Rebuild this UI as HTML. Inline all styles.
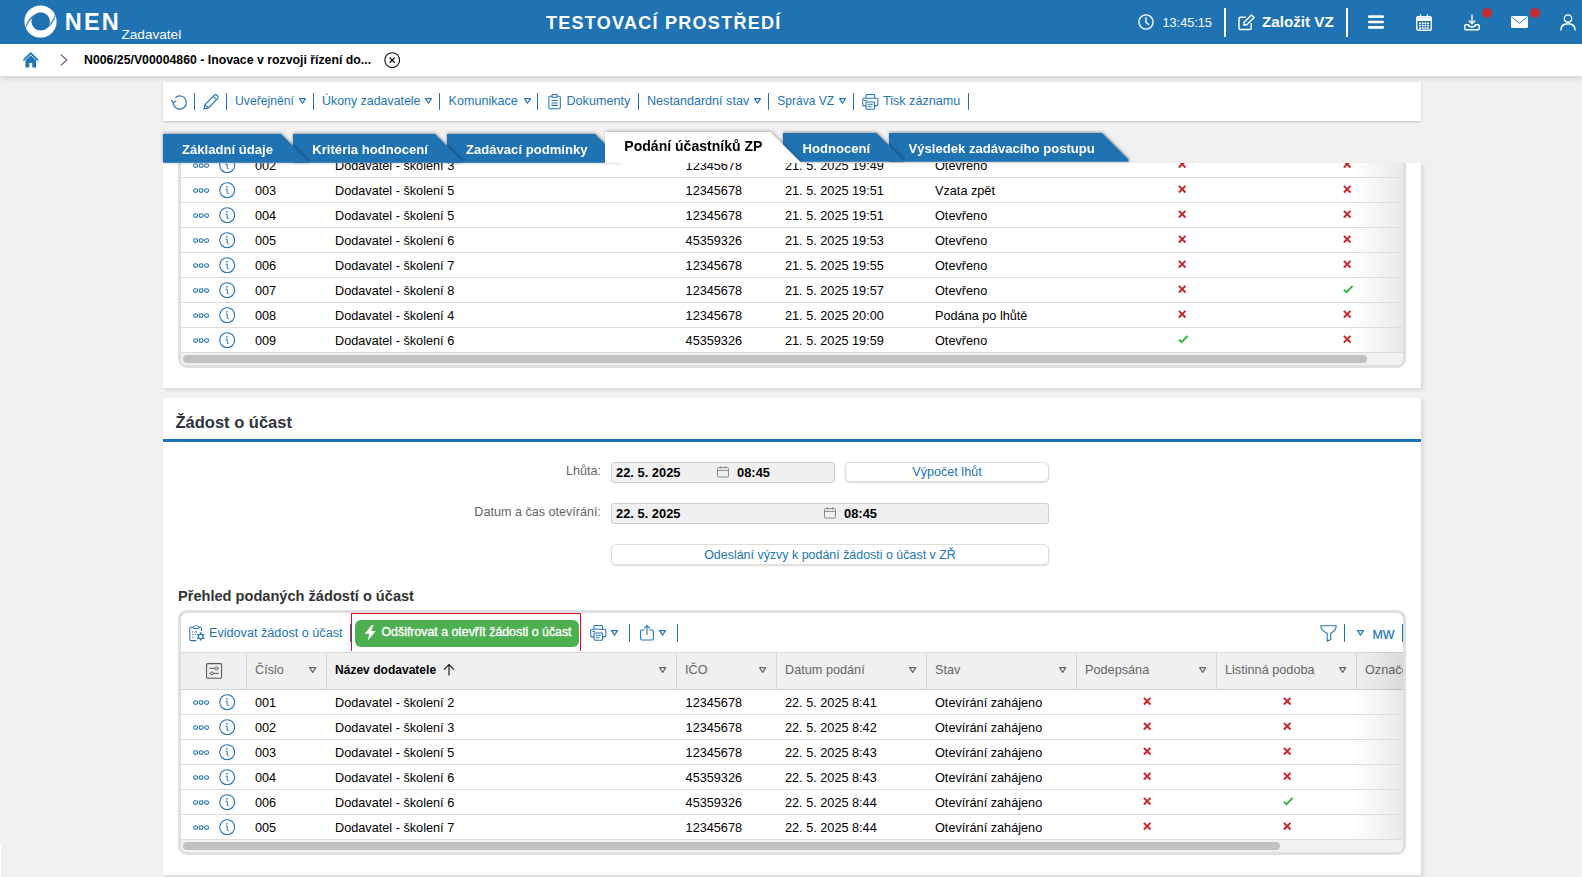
<!DOCTYPE html>
<html lang="cs"><head><meta charset="utf-8"><title>NEN</title>
<style>
*{box-sizing:border-box;margin:0;padding:0}
html,body{width:1582px;height:877px;overflow:hidden;background:#f1f1f1;font-family:"Liberation Sans",sans-serif;font-size:12.6px;color:#000}
.a{position:absolute;white-space:nowrap}
svg{position:absolute;overflow:visible}
#hdr{left:0;top:0;width:1582px;height:44px;background:#1f73b3;z-index:20}
#bc{left:0;top:44px;width:1582px;height:32px;background:#fff;box-shadow:0 2px 5px rgba(0,0,0,.15);z-index:19}
#tb{left:163px;top:82px;width:1258px;height:39px;background:#fff;box-shadow:0 1px 2px rgba(0,0,0,.18)}
.tbt{top:94px;color:#2275b4;font-size:12.6px;line-height:15px}
.sep{width:1.3px;background:#2275b4}
#p1{left:163px;top:162.6px;width:1258px;height:225.4px;background:#fff;box-shadow:2px 2px 4px rgba(0,0,0,.12);overflow:hidden}
#p2{left:163px;top:398px;width:1258px;height:477px;background:#fff;box-shadow:2px 2px 4px rgba(0,0,0,.12)}
.grid{border:3px solid #dedfe0;border-radius:9px;background:#fff;overflow:hidden}
.row{left:0;width:1400px;height:25px;border-bottom:1px solid #dcdcdc;font-size:12.7px;line-height:24px}
.row span{position:absolute;top:0.7px}
.hc{top:0;height:36px;border-left:1px solid #d4d4d4;color:#666;font-size:12.7px;line-height:35px;padding-left:8px}
.fade{top:0;right:0;width:52px;background:linear-gradient(to right,rgba(0,0,0,0),rgba(0,0,0,.035) 45%,rgba(0,0,0,.09))}
.sbt{left:0;height:13px;background:#f1f1f1}
.sbth{height:8px;border-radius:4px;background:#c1c1c1}
.tab{top:133.7px;height:28.6px;color:#fff;font-weight:bold;font-size:13.1px;line-height:29px;filter:drop-shadow(0 -1px 1.5px rgba(0,0,0,.25)) drop-shadow(1.5px 0 1.5px rgba(0,0,0,.2))}
.lbl{color:#666;font-size:12.6px;text-align:right}
.fld{background:#f0f0f0;border:1px solid #cfcfcf;border-radius:3px;height:21px}
.fv{font-weight:bold;font-size:12.9px;line-height:15px}
.btn{background:#fff;border:1px solid #ddd;border-radius:5px;box-shadow:0 1px 2px rgba(0,0,0,.15);color:#2275b4;text-align:center;font-size:12.6px}
</style></head>
<body>
<div id="hdr" class="a">
<svg style="left:24px;top:5.4px" width="33" height="33" viewBox="0 0 33 33"><circle cx="16.5" cy="16.5" r="16.1" fill="#fff"/><circle cx="16.7" cy="16.4" r="9.2" fill="#1f73b3"/><path d="M9.6 10.2Q3.6 14.6 1.4 23.2Q4.4 15.4 10.2 11Z" fill="#1f73b3" stroke="#1f73b3" stroke-width="0.5"/><path d="M23.4 22.8Q29.4 18.4 31.6 9.8Q28.6 17.6 22.8 22Z" fill="#1f73b3" stroke="#1f73b3" stroke-width="0.5"/></svg>
<div class="a" style="left:64.8px;top:9px;font-size:23.5px;font-weight:bold;color:#fff;letter-spacing:2.2px;line-height:27px">NEN</div>
<div class="a" style="left:121.5px;top:27px;font-size:13.6px;color:#fff;line-height:16px">Zadavatel</div>
<div class="a" style="left:546px;top:11.7px;font-size:18px;font-weight:bold;color:#fff;letter-spacing:1.27px;line-height:22px">TESTOVACÍ PROSTŘEDÍ</div>
<svg style="left:1138px;top:14px" width="16" height="16" viewBox="0 0 16 16"><circle cx="8" cy="8" r="7.1" fill="none" stroke="#fff" stroke-width="1.4"/><path d="M8 3.8V8.2L10.6 10.6" fill="none" stroke="#fff" stroke-width="1.4" stroke-linecap="round"/></svg>
<div class="a" style="left:1162.5px;top:15.9px;font-size:12.7px;color:#fff;line-height:15px">13:45:15</div>
<div class="a" style="left:1224px;top:8px;width:2px;height:29px;background:#fff"></div>
<svg style="left:1238px;top:13.5px" width="17" height="17" viewBox="0 0 17 17"><path d="M8 3.2H2.6Q1 3.2 1 4.8V14Q1 15.6 2.6 15.6H11.6Q13.2 15.6 13.2 14V9" fill="none" stroke="#fff" stroke-width="1.5"/><path d="M6.2 8.2L13.4 1L16 3.6L8.8 10.8L5.8 11.2Z" fill="none" stroke="#fff" stroke-width="1.4" stroke-linejoin="round"/></svg>
<div class="a" style="left:1262px;top:12.5px;font-size:15.2px;font-weight:bold;color:#fff;line-height:18px">Založit VZ</div>
<div class="a" style="left:1346px;top:8px;width:2px;height:29px;background:#fff"></div>
<svg style="left:1368px;top:15px" width="16" height="14" viewBox="0 0 16 14"><path d="M1.2 1.6H14.8M1.2 7H14.8M1.2 12.4H14.8" stroke="#fff" stroke-width="2.6" stroke-linecap="round"/></svg>
<svg style="left:1416px;top:13.5px" width="16" height="17" viewBox="0 0 16 17"><rect x="0.7" y="2.7" width="14.6" height="13.6" rx="1.5" fill="none" stroke="#fff" stroke-width="1.4"/><path d="M0.7 3.5H15.3V7H0.7Z" fill="#fff"/><path d="M4.5 0.3V3M11.5 0.3V3" stroke="#fff" stroke-width="1.4"/><path d="M3 9.2H13M3 11.6H13M3 14H13" stroke="#fff" stroke-width="1.5" stroke-dasharray="2 0.7"/></svg>
<svg style="left:1464px;top:13.5px" width="16" height="17" viewBox="0 0 16 17"><path d="M8 0.5V9.5M4.8 6.6L8 9.8L11.2 6.6" fill="none" stroke="#fff" stroke-width="1.4"/><path d="M4.5 10.8H2Q0.8 10.8 0.8 12V14.6Q0.8 15.8 2 15.8H14Q15.2 15.8 15.2 14.6V12Q15.2 10.8 14 10.8H11.5Q11.2 12.8 9.5 12.8H6.5Q4.8 12.8 4.5 10.8Z" fill="none" stroke="#fff" stroke-width="1.4"/></svg>
<div class="a" style="left:1482px;top:8px;width:10.2px;height:10.2px;border-radius:50%;background:#c62b2b"></div>
<svg style="left:1511px;top:16px" width="17" height="12" viewBox="0 0 17 12"><rect x="0" y="0" width="17" height="12" rx="1.6" fill="#fff"/><path d="M1.5 1.6L8.5 7.2L15.5 1.6" fill="none" stroke="#1f73b3" stroke-width="0.9"/></svg>
<div class="a" style="left:1530px;top:8px;width:10.2px;height:10.2px;border-radius:50%;background:#c62b2b"></div>
<svg style="left:1560px;top:13.5px" width="16" height="17" viewBox="0 0 16 17"><circle cx="8" cy="4.6" r="3.7" fill="none" stroke="#fff" stroke-width="1.4"/><path d="M0.8 16.5Q0.8 9.8 8 9.8Q15.2 9.8 15.2 16.5" fill="none" stroke="#fff" stroke-width="1.4"/></svg>
</div>
<div id="bc" class="a">
<svg style="left:23.2px;top:7.6px" width="15.5" height="16.2" viewBox="0 0 16 17"><path d="M0.8 8.2L8 1.2L15.2 8.2" fill="none" stroke="#2275b4" stroke-width="1.8" stroke-linecap="round" stroke-linejoin="round"/><path d="M2.4 8.6L8 3.4L13.6 8.6V16.4H9.6V11.6H6.4V16.4H2.4Z" fill="#2275b4"/></svg>
<svg style="left:60px;top:10px" width="8" height="12" viewBox="0 0 8 12"><path d="M0.8 0.6L6.8 6L0.8 11.4" fill="none" stroke="#45597a" stroke-width="1.1"/></svg>
<div class="a" style="left:84px;top:8.5px;font-size:12.3px;font-weight:bold;color:#000;line-height:15px">N006/25/V00004860 - Inovace v rozvoji řízení do...</div>
<svg style="left:384px;top:8px" width="16.4" height="16.4" viewBox="0 0 16.4 16.4"><circle cx="8.2" cy="8.2" r="7.4" fill="none" stroke="#111" stroke-width="1.1"/><path d="M5.6 5.6L10.8 10.8M10.8 5.6L5.6 10.8" stroke="#111" stroke-width="1.3"/></svg>
</div>
<div id="tb" class="a"></div>
<svg style="left:170.5px;top:94px" width="17" height="16" viewBox="0 0 17 16"><path d="M2.2 8.6A6.6 6.6 0 1 0 4.4 3.6" fill="none" stroke="#2275b4" stroke-width="1.2"/><path d="M0.4 6.2L2.4 9L5.2 7" fill="none" stroke="#2275b4" stroke-width="1.2"/></svg>
<div class="a sep" style="left:194.1px;top:93px;height:16.9px"></div>
<svg style="left:203px;top:94px" width="16" height="16" viewBox="0 0 16 16"><path d="M1 15L2 10.6L11.6 1Q12.6 0.2 13.8 1.2L14.8 2.2Q15.8 3.4 14.8 4.4L5.4 14Z" fill="none" stroke="#2275b4" stroke-width="1.15" stroke-linejoin="round"/><path d="M2 10.6L5.4 14M10.4 2.4L13.6 5.6" stroke="#2275b4" stroke-width="1.1" fill="none"/></svg>
<div class="a sep" style="left:226.1px;top:93px;height:16.9px"></div>
<div class="a tbt" style="left:235px;font-size:12.2px">Uveřejnění</div>
<svg style="left:298.5px;top:97.9px" width="7" height="6" viewBox="0 0 7 6"><path d="M0.6 0.6H6.4L3.5 5.2Z" fill="none" stroke="#2275b4" stroke-width="1.2" stroke-linejoin="round"/></svg>
<div class="a sep" style="left:313.1px;top:93px;height:16.9px"></div>
<div class="a tbt" style="left:322px;font-size:12.4px">Úkony zadavatele</div>
<svg style="left:425px;top:97.9px" width="7" height="6" viewBox="0 0 7 6"><path d="M0.6 0.6H6.4L3.5 5.2Z" fill="none" stroke="#2275b4" stroke-width="1.2" stroke-linejoin="round"/></svg>
<div class="a sep" style="left:439.1px;top:93px;height:16.9px"></div>
<div class="a tbt" style="left:448.5px;font-size:12.6px">Komunikace</div>
<svg style="left:523.5px;top:97.9px" width="7" height="6" viewBox="0 0 7 6"><path d="M0.6 0.6H6.4L3.5 5.2Z" fill="none" stroke="#2275b4" stroke-width="1.2" stroke-linejoin="round"/></svg>
<div class="a sep" style="left:537.1px;top:93px;height:16.9px"></div>
<svg style="left:547.5px;top:94.2px" width="13.2" height="15.4" viewBox="0 0 13.5 16.5"><rect x="0.6" y="2.4" width="12.3" height="13.5" rx="1.4" fill="none" stroke="#2275b4" stroke-width="1.1"/><path d="M4 2.4V1.6Q4 0.6 5 0.6H8.5Q9.5 0.6 9.5 1.6V2.4V3.6H4Z" fill="#fff" stroke="#2275b4" stroke-width="1.1"/><path d="M3.4 7H10.1M3.4 9.6H10.1M3.4 12.2H10.1" stroke="#2275b4" stroke-width="1.1"/></svg>
<div class="a tbt" style="left:566.5px;font-size:12.6px">Dokumenty</div>
<div class="a sep" style="left:638.1px;top:93px;height:16.9px"></div>
<div class="a tbt" style="left:647px;font-size:12.6px">Nestandardní stav</div>
<svg style="left:754px;top:97.9px" width="7" height="6" viewBox="0 0 7 6"><path d="M0.6 0.6H6.4L3.5 5.2Z" fill="none" stroke="#2275b4" stroke-width="1.2" stroke-linejoin="round"/></svg>
<div class="a sep" style="left:768.1px;top:93px;height:16.9px"></div>
<div class="a tbt" style="left:777.3px;font-size:12.05px">Správa VZ</div>
<svg style="left:839px;top:97.9px" width="7" height="6" viewBox="0 0 7 6"><path d="M0.6 0.6H6.4L3.5 5.2Z" fill="none" stroke="#2275b4" stroke-width="1.2" stroke-linejoin="round"/></svg>
<div class="a sep" style="left:853.1px;top:93px;height:16.9px"></div>
<svg style="left:862px;top:94px" width="16.6" height="15.8" viewBox="0 0 17 16.5"><path d="M4 4.4V1.6Q4 0.6 5 0.6H12Q13 0.6 13 1.6V4.4" fill="none" stroke="#2275b4" stroke-width="1.1"/><path d="M4 12.4H2Q0.6 12.4 0.6 11V5.8Q0.6 4.4 2 4.4H15Q16.4 4.4 16.4 5.8V11Q16.4 12.4 15 12.4H13" fill="none" stroke="#2275b4" stroke-width="1.1"/><rect x="4" y="8.4" width="9" height="7.5" rx="1" fill="#fff" stroke="#2275b4" stroke-width="1.1"/><path d="M5.8 10.8H11.2M5.8 13.4H9.6M2.4 6.8H5" stroke="#2275b4" stroke-width="1.1"/></svg>
<div class="a tbt" style="left:883px;font-size:12.6px">Tisk záznamu</div>
<div class="a sep" style="left:968.1px;top:93px;height:16.9px"></div>
<div id="p1" class="a">
<div class="a grid" style="left:15px;top:-59.6px;width:1228px;height:265px">
<div class="a fade" style="height:247px"></div>
<div class="a row" style="top:47px"><svg style="left:12px;top:9.9px" width="17" height="5.2" viewBox="0 0 17 5.2"><ellipse cx="2.6" cy="2.6" rx="2" ry="1.8" fill="none" stroke="#2275b4" stroke-width="1.1"/><ellipse cx="8.1" cy="2.6" rx="2" ry="1.8" fill="none" stroke="#2275b4" stroke-width="1.1"/><ellipse cx="13.6" cy="2.6" rx="2" ry="1.8" fill="none" stroke="#2275b4" stroke-width="1.1"/></svg><svg style="left:37.8px;top:4.300000000000001px" width="16.4" height="16.4" viewBox="0 0 16.4 16.4"><circle cx="8.2" cy="8.2" r="7.5" fill="none" stroke="#2275b4" stroke-width="1.1"/><circle cx="7.9" cy="4.9" r="0.8" fill="#2275b4"/><path d="M7 7.2H8.2V11.2Q8.2 11.9 9.3 11.6" fill="none" stroke="#2275b4" stroke-width="1" stroke-linecap="round"/></svg><span style="left:74px">002</span><span style="left:154px">Dodavatel - školení 3</span><span style="left:504.6px">12345678</span><span style="left:604px">21. 5. 2025 19:49</span><span style="left:754px">Otevřeno</span><svg style="left:997.3px;top:7.3px" width="8.4" height="8.4" viewBox="0 0 8.4 8.4"><path d="M0.9 0.9L7.5 7.5M7.5 0.9L0.9 7.5" stroke="#c9282a" stroke-width="2" fill="none"/></svg><svg style="left:1162.3px;top:7.3px" width="8.4" height="8.4" viewBox="0 0 8.4 8.4"><path d="M0.9 0.9L7.5 7.5M7.5 0.9L0.9 7.5" stroke="#c9282a" stroke-width="2" fill="none"/></svg></div>
<div class="a row" style="top:72px"><svg style="left:12px;top:9.9px" width="17" height="5.2" viewBox="0 0 17 5.2"><ellipse cx="2.6" cy="2.6" rx="2" ry="1.8" fill="none" stroke="#2275b4" stroke-width="1.1"/><ellipse cx="8.1" cy="2.6" rx="2" ry="1.8" fill="none" stroke="#2275b4" stroke-width="1.1"/><ellipse cx="13.6" cy="2.6" rx="2" ry="1.8" fill="none" stroke="#2275b4" stroke-width="1.1"/></svg><svg style="left:37.8px;top:4.300000000000001px" width="16.4" height="16.4" viewBox="0 0 16.4 16.4"><circle cx="8.2" cy="8.2" r="7.5" fill="none" stroke="#2275b4" stroke-width="1.1"/><circle cx="7.9" cy="4.9" r="0.8" fill="#2275b4"/><path d="M7 7.2H8.2V11.2Q8.2 11.9 9.3 11.6" fill="none" stroke="#2275b4" stroke-width="1" stroke-linecap="round"/></svg><span style="left:74px">003</span><span style="left:154px">Dodavatel - školení 5</span><span style="left:504.6px">12345678</span><span style="left:604px">21. 5. 2025 19:51</span><span style="left:754px">Vzata zpět</span><svg style="left:997.3px;top:7.3px" width="8.4" height="8.4" viewBox="0 0 8.4 8.4"><path d="M0.9 0.9L7.5 7.5M7.5 0.9L0.9 7.5" stroke="#c9282a" stroke-width="2" fill="none"/></svg><svg style="left:1162.3px;top:7.3px" width="8.4" height="8.4" viewBox="0 0 8.4 8.4"><path d="M0.9 0.9L7.5 7.5M7.5 0.9L0.9 7.5" stroke="#c9282a" stroke-width="2" fill="none"/></svg></div>
<div class="a row" style="top:97px"><svg style="left:12px;top:9.9px" width="17" height="5.2" viewBox="0 0 17 5.2"><ellipse cx="2.6" cy="2.6" rx="2" ry="1.8" fill="none" stroke="#2275b4" stroke-width="1.1"/><ellipse cx="8.1" cy="2.6" rx="2" ry="1.8" fill="none" stroke="#2275b4" stroke-width="1.1"/><ellipse cx="13.6" cy="2.6" rx="2" ry="1.8" fill="none" stroke="#2275b4" stroke-width="1.1"/></svg><svg style="left:37.8px;top:4.300000000000001px" width="16.4" height="16.4" viewBox="0 0 16.4 16.4"><circle cx="8.2" cy="8.2" r="7.5" fill="none" stroke="#2275b4" stroke-width="1.1"/><circle cx="7.9" cy="4.9" r="0.8" fill="#2275b4"/><path d="M7 7.2H8.2V11.2Q8.2 11.9 9.3 11.6" fill="none" stroke="#2275b4" stroke-width="1" stroke-linecap="round"/></svg><span style="left:74px">004</span><span style="left:154px">Dodavatel - školení 5</span><span style="left:504.6px">12345678</span><span style="left:604px">21. 5. 2025 19:51</span><span style="left:754px">Otevřeno</span><svg style="left:997.3px;top:7.3px" width="8.4" height="8.4" viewBox="0 0 8.4 8.4"><path d="M0.9 0.9L7.5 7.5M7.5 0.9L0.9 7.5" stroke="#c9282a" stroke-width="2" fill="none"/></svg><svg style="left:1162.3px;top:7.3px" width="8.4" height="8.4" viewBox="0 0 8.4 8.4"><path d="M0.9 0.9L7.5 7.5M7.5 0.9L0.9 7.5" stroke="#c9282a" stroke-width="2" fill="none"/></svg></div>
<div class="a row" style="top:122px"><svg style="left:12px;top:9.9px" width="17" height="5.2" viewBox="0 0 17 5.2"><ellipse cx="2.6" cy="2.6" rx="2" ry="1.8" fill="none" stroke="#2275b4" stroke-width="1.1"/><ellipse cx="8.1" cy="2.6" rx="2" ry="1.8" fill="none" stroke="#2275b4" stroke-width="1.1"/><ellipse cx="13.6" cy="2.6" rx="2" ry="1.8" fill="none" stroke="#2275b4" stroke-width="1.1"/></svg><svg style="left:37.8px;top:4.300000000000001px" width="16.4" height="16.4" viewBox="0 0 16.4 16.4"><circle cx="8.2" cy="8.2" r="7.5" fill="none" stroke="#2275b4" stroke-width="1.1"/><circle cx="7.9" cy="4.9" r="0.8" fill="#2275b4"/><path d="M7 7.2H8.2V11.2Q8.2 11.9 9.3 11.6" fill="none" stroke="#2275b4" stroke-width="1" stroke-linecap="round"/></svg><span style="left:74px">005</span><span style="left:154px">Dodavatel - školení 6</span><span style="left:504.6px">45359326</span><span style="left:604px">21. 5. 2025 19:53</span><span style="left:754px">Otevřeno</span><svg style="left:997.3px;top:7.3px" width="8.4" height="8.4" viewBox="0 0 8.4 8.4"><path d="M0.9 0.9L7.5 7.5M7.5 0.9L0.9 7.5" stroke="#c9282a" stroke-width="2" fill="none"/></svg><svg style="left:1162.3px;top:7.3px" width="8.4" height="8.4" viewBox="0 0 8.4 8.4"><path d="M0.9 0.9L7.5 7.5M7.5 0.9L0.9 7.5" stroke="#c9282a" stroke-width="2" fill="none"/></svg></div>
<div class="a row" style="top:147px"><svg style="left:12px;top:9.9px" width="17" height="5.2" viewBox="0 0 17 5.2"><ellipse cx="2.6" cy="2.6" rx="2" ry="1.8" fill="none" stroke="#2275b4" stroke-width="1.1"/><ellipse cx="8.1" cy="2.6" rx="2" ry="1.8" fill="none" stroke="#2275b4" stroke-width="1.1"/><ellipse cx="13.6" cy="2.6" rx="2" ry="1.8" fill="none" stroke="#2275b4" stroke-width="1.1"/></svg><svg style="left:37.8px;top:4.300000000000001px" width="16.4" height="16.4" viewBox="0 0 16.4 16.4"><circle cx="8.2" cy="8.2" r="7.5" fill="none" stroke="#2275b4" stroke-width="1.1"/><circle cx="7.9" cy="4.9" r="0.8" fill="#2275b4"/><path d="M7 7.2H8.2V11.2Q8.2 11.9 9.3 11.6" fill="none" stroke="#2275b4" stroke-width="1" stroke-linecap="round"/></svg><span style="left:74px">006</span><span style="left:154px">Dodavatel - školení 7</span><span style="left:504.6px">12345678</span><span style="left:604px">21. 5. 2025 19:55</span><span style="left:754px">Otevřeno</span><svg style="left:997.3px;top:7.3px" width="8.4" height="8.4" viewBox="0 0 8.4 8.4"><path d="M0.9 0.9L7.5 7.5M7.5 0.9L0.9 7.5" stroke="#c9282a" stroke-width="2" fill="none"/></svg><svg style="left:1162.3px;top:7.3px" width="8.4" height="8.4" viewBox="0 0 8.4 8.4"><path d="M0.9 0.9L7.5 7.5M7.5 0.9L0.9 7.5" stroke="#c9282a" stroke-width="2" fill="none"/></svg></div>
<div class="a row" style="top:172px"><svg style="left:12px;top:9.9px" width="17" height="5.2" viewBox="0 0 17 5.2"><ellipse cx="2.6" cy="2.6" rx="2" ry="1.8" fill="none" stroke="#2275b4" stroke-width="1.1"/><ellipse cx="8.1" cy="2.6" rx="2" ry="1.8" fill="none" stroke="#2275b4" stroke-width="1.1"/><ellipse cx="13.6" cy="2.6" rx="2" ry="1.8" fill="none" stroke="#2275b4" stroke-width="1.1"/></svg><svg style="left:37.8px;top:4.300000000000001px" width="16.4" height="16.4" viewBox="0 0 16.4 16.4"><circle cx="8.2" cy="8.2" r="7.5" fill="none" stroke="#2275b4" stroke-width="1.1"/><circle cx="7.9" cy="4.9" r="0.8" fill="#2275b4"/><path d="M7 7.2H8.2V11.2Q8.2 11.9 9.3 11.6" fill="none" stroke="#2275b4" stroke-width="1" stroke-linecap="round"/></svg><span style="left:74px">007</span><span style="left:154px">Dodavatel - školení 8</span><span style="left:504.6px">12345678</span><span style="left:604px">21. 5. 2025 19:57</span><span style="left:754px">Otevřeno</span><svg style="left:997.3px;top:7.3px" width="8.4" height="8.4" viewBox="0 0 8.4 8.4"><path d="M0.9 0.9L7.5 7.5M7.5 0.9L0.9 7.5" stroke="#c9282a" stroke-width="2" fill="none"/></svg><svg style="left:1161.8px;top:7.3px" width="10.4" height="8.4" viewBox="0 0 10.4 8.4"><path d="M0.9 4.8L3.6 7.2L9.6 0.9" stroke="#2fb843" stroke-width="2" fill="none"/></svg></div>
<div class="a row" style="top:197px"><svg style="left:12px;top:9.9px" width="17" height="5.2" viewBox="0 0 17 5.2"><ellipse cx="2.6" cy="2.6" rx="2" ry="1.8" fill="none" stroke="#2275b4" stroke-width="1.1"/><ellipse cx="8.1" cy="2.6" rx="2" ry="1.8" fill="none" stroke="#2275b4" stroke-width="1.1"/><ellipse cx="13.6" cy="2.6" rx="2" ry="1.8" fill="none" stroke="#2275b4" stroke-width="1.1"/></svg><svg style="left:37.8px;top:4.300000000000001px" width="16.4" height="16.4" viewBox="0 0 16.4 16.4"><circle cx="8.2" cy="8.2" r="7.5" fill="none" stroke="#2275b4" stroke-width="1.1"/><circle cx="7.9" cy="4.9" r="0.8" fill="#2275b4"/><path d="M7 7.2H8.2V11.2Q8.2 11.9 9.3 11.6" fill="none" stroke="#2275b4" stroke-width="1" stroke-linecap="round"/></svg><span style="left:74px">008</span><span style="left:154px">Dodavatel - školení 4</span><span style="left:504.6px">12345678</span><span style="left:604px">21. 5. 2025 20:00</span><span style="left:754px">Podána po lhůtě</span><svg style="left:997.3px;top:7.3px" width="8.4" height="8.4" viewBox="0 0 8.4 8.4"><path d="M0.9 0.9L7.5 7.5M7.5 0.9L0.9 7.5" stroke="#c9282a" stroke-width="2" fill="none"/></svg><svg style="left:1162.3px;top:7.3px" width="8.4" height="8.4" viewBox="0 0 8.4 8.4"><path d="M0.9 0.9L7.5 7.5M7.5 0.9L0.9 7.5" stroke="#c9282a" stroke-width="2" fill="none"/></svg></div>
<div class="a row" style="top:222px"><svg style="left:12px;top:9.9px" width="17" height="5.2" viewBox="0 0 17 5.2"><ellipse cx="2.6" cy="2.6" rx="2" ry="1.8" fill="none" stroke="#2275b4" stroke-width="1.1"/><ellipse cx="8.1" cy="2.6" rx="2" ry="1.8" fill="none" stroke="#2275b4" stroke-width="1.1"/><ellipse cx="13.6" cy="2.6" rx="2" ry="1.8" fill="none" stroke="#2275b4" stroke-width="1.1"/></svg><svg style="left:37.8px;top:4.300000000000001px" width="16.4" height="16.4" viewBox="0 0 16.4 16.4"><circle cx="8.2" cy="8.2" r="7.5" fill="none" stroke="#2275b4" stroke-width="1.1"/><circle cx="7.9" cy="4.9" r="0.8" fill="#2275b4"/><path d="M7 7.2H8.2V11.2Q8.2 11.9 9.3 11.6" fill="none" stroke="#2275b4" stroke-width="1" stroke-linecap="round"/></svg><span style="left:74px">009</span><span style="left:154px">Dodavatel - školení 6</span><span style="left:504.6px">45359326</span><span style="left:604px">21. 5. 2025 19:59</span><span style="left:754px">Otevřeno</span><svg style="left:996.8px;top:7.3px" width="10.4" height="8.4" viewBox="0 0 10.4 8.4"><path d="M0.9 4.8L3.6 7.2L9.6 0.9" stroke="#2fb843" stroke-width="2" fill="none"/></svg><svg style="left:1162.3px;top:7.3px" width="8.4" height="8.4" viewBox="0 0 8.4 8.4"><path d="M0.9 0.9L7.5 7.5M7.5 0.9L0.9 7.5" stroke="#c9282a" stroke-width="2" fill="none"/></svg></div>
<div class="a sbt" style="top:247px;width:1222px"></div>
<div class="a sbth" style="left:2px;top:249px;width:1184px"></div>
</div></div>
<div class="a tab" style="left:889px;top:133.1px;width:239.5px;z-index:6"><div class="a" style="left:0;top:0;width:239.5px;height:28.6px;background:#1f73b3;clip-path:polygon(0 0,213px 0,239.5px 26.5px,239.5px 28.6px,0 28.6px)"></div><div class="a" style="left:19.5px;top:0.6px">Výsledek zadávacího postupu</div></div>
<div class="a tab" style="left:783px;top:133.1px;width:120.0px;z-index:7"><div class="a" style="left:0;top:0;width:120.0px;height:28.6px;background:#1f73b3;clip-path:polygon(0 0,93.5px 0,120.0px 26.5px,120.0px 28.6px,0 28.6px)"></div><div class="a" style="left:19.5px;top:0.6px">Hodnocení</div></div>
<div class="a tab" style="left:447px;top:134.1px;width:174.5px;z-index:8"><div class="a" style="left:0;top:0;width:174.5px;height:28.6px;background:#1f73b3;clip-path:polygon(0 0,148px 0,174.5px 26.5px,174.5px 28.6px,0 28.6px)"></div><div class="a" style="left:19px;top:0.6px">Zadávací podmínky</div></div>
<div class="a tab" style="left:293px;top:134.1px;width:168.5px;z-index:9"><div class="a" style="left:0;top:0;width:168.5px;height:28.6px;background:#1f73b3;clip-path:polygon(0 0,142px 0,168.5px 26.5px,168.5px 28.6px,0 28.6px)"></div><div class="a" style="left:19.30000000000001px;top:0.6px">Kritéria hodnocení</div></div>
<div class="a tab" style="left:163px;top:134.1px;width:144.5px;z-index:10"><div class="a" style="left:0;top:0;width:144.5px;height:28.6px;background:#1f73b3;clip-path:polygon(0 0,118px 0,144.5px 26.5px,144.5px 28.6px,0 28.6px)"></div><div class="a" style="left:19px;top:0.6px">Základní údaje</div></div>
<div class="a" style="left:595px;top:122px;width:220px;height:40.9px;overflow:hidden;z-index:11"><div class="a" style="left:10px;top:10px;width:196px;height:30.9px;filter:drop-shadow(0 -1px 1.5px rgba(0,0,0,.1)) drop-shadow(1.5px -0.5px 1.5px rgba(0,0,0,.18))"><div class="a" style="left:0;top:0;width:196px;height:30.9px;background:#fff;clip-path:polygon(0 0,165.5px 0,196px 30.5px,196px 30.9px,0 30.9px)"></div><div class="a" style="left:19.3px;top:6.4px;font-size:14.05px;font-weight:bold;line-height:17px">Podání účastníků ZP</div></div></div>
<div id="p2" class="a">
<div class="a" style="left:12.5px;top:14.1px;font-size:16.5px;font-weight:bold;color:#2c3440;line-height:20px">Žádost o účast</div>
<div class="a" style="left:0;top:41px;width:1258px;height:3px;background:#1f73b3"></div>
<div class="a lbl" style="left:237px;top:65.8px;width:201px;line-height:15px">Lhůta:</div>
<div class="a fld" style="left:448px;top:64px;width:224px"></div>
<div class="a fv" style="left:453px;top:66.8px">22. 5. 2025</div>
<svg style="left:554px;top:68px" width="12" height="11.5" viewBox="0 0 12 11.5"><rect x="0.5" y="1.6" width="11" height="9.4" rx="1" fill="none" stroke="#8a8a8a" stroke-width="1"/><path d="M0.5 4.4H11.5M3.3 0V2.6M8.7 0V2.6" stroke="#8a8a8a" stroke-width="1"/></svg>
<div class="a fv" style="left:574px;top:66.8px">08:45</div>
<div class="a btn" style="left:682px;top:64px;width:204px;height:19.5px;line-height:19.6px">Výpočet lhůt</div>
<div class="a lbl" style="left:237px;top:106.8px;width:201px;line-height:15px">Datum a čas otevírání:</div>
<div class="a fld" style="left:448px;top:105px;width:438px"></div>
<div class="a fv" style="left:453px;top:107.8px">22. 5. 2025</div>
<svg style="left:661px;top:109px" width="12" height="11.5" viewBox="0 0 12 11.5"><rect x="0.5" y="1.6" width="11" height="9.4" rx="1" fill="none" stroke="#8a8a8a" stroke-width="1"/><path d="M0.5 4.4H11.5M3.3 0V2.6M8.7 0V2.6" stroke="#8a8a8a" stroke-width="1"/></svg>
<div class="a fv" style="left:681px;top:107.8px">08:45</div>
<div class="a btn" style="left:448px;top:146px;width:438px;height:20.5px;line-height:20.6px;font-size:12.45px">Odeslání výzvy k podání žádosti o účast v ZŘ</div>
<div class="a" style="left:15px;top:188.5px;font-size:14.6px;font-weight:bold;color:#333;line-height:18px">Přehled podaných žádostí o účast</div>
<div class="a grid" style="left:15px;top:212px;width:1228px;height:244.7px">
<svg style="left:7.5px;top:11.5px" width="16.6" height="16.2" viewBox="0 0 17 17"><path d="M5.2 2.4H2Q0.6 2.4 0.6 3.8V15Q0.6 16.4 2 16.4H7.4" fill="none" stroke="#2275b4" stroke-width="1.1"/><path d="M9.8 2.4H11.6Q13 2.4 13 3.8V6.4" fill="none" stroke="#2275b4" stroke-width="1.1"/><path d="M4.6 3.6V2Q4.6 1.4 5.2 1.4H6Q6.4 0.4 7.4 0.4Q8.4 0.4 8.8 1.4H9.6Q10.2 1.4 10.2 2V3.6Z" fill="#fff" stroke="#2275b4" stroke-width="1"/><path d="M3 7.2H4.2M3 10H4.2M3 12.8H4.2M6 7.2H8M6 10H7" stroke="#2275b4" stroke-width="1.1"/><circle cx="12" cy="12" r="2.4" fill="none" stroke="#2275b4" stroke-width="1.1"/><path d="M12 7.6V9.4M12 14.6V16.4M8.2 9.8L9.8 10.7M14.2 13.3L15.8 14.2M8.2 14.2L9.8 13.3M14.2 10.7L15.8 9.8" stroke="#2275b4" stroke-width="1.5"/></svg>
<div class="a" style="left:28px;top:12.5px;color:#2275b4;font-size:12.65px;line-height:15px">Evidovat žádost o účast</div>
<div class="a sep" style="left:168.5px;top:11px;height:17.5px"></div>
<div class="a" style="left:170px;top:0;width:230px;height:37.5px;border:1px solid #e01020;border-bottom:none"></div>
<div class="a" style="left:174px;top:6.6px;width:223.8px;height:27px;background:#4caf50;border-radius:6px"></div>
<svg style="left:183px;top:12px" width="12.5" height="15.6" viewBox="0 0 12.5 15.6"><path d="M7.6 0L0.6 8.8H5.2L3.8 15.6L11.9 6H7.1L9.6 0Z" fill="#fff"/></svg>
<div class="a" style="left:200.5px;top:12.2px;color:#fff;font-size:12.35px;line-height:15px;-webkit-text-stroke:0.35px #fff">Odšifrovat a otevřít žádosti o účast</div>
<svg style="left:408.6px;top:12px" width="16.6" height="15.8" viewBox="0 0 17 16.5"><path d="M4 4.4V1.6Q4 0.6 5 0.6H12Q13 0.6 13 1.6V4.4" fill="none" stroke="#2275b4" stroke-width="1.1"/><path d="M4 12.4H2Q0.6 12.4 0.6 11V5.8Q0.6 4.4 2 4.4H15Q16.4 4.4 16.4 5.8V11Q16.4 12.4 15 12.4H13" fill="none" stroke="#2275b4" stroke-width="1.1"/><rect x="4" y="8.4" width="9" height="7.5" rx="1" fill="#fff" stroke="#2275b4" stroke-width="1.1"/><path d="M5.8 10.8H11.2M5.8 13.4H9.6M2.4 6.8H5" stroke="#2275b4" stroke-width="1.1"/></svg>
<svg style="left:429.5px;top:16.6px" width="7" height="6" viewBox="0 0 7 6"><path d="M0.6 0.6H6.4L3.5 5.2Z" fill="none" stroke="#2275b4" stroke-width="1.2" stroke-linejoin="round"/></svg>
<div class="a sep" style="left:447.8px;top:11px;height:17.5px"></div>
<svg style="left:459px;top:12px" width="14" height="15.6" viewBox="0 0 14 15.6"><path d="M4.4 5H2Q0.6 5 0.6 6.4V13.6Q0.6 15 2 15H12Q13.4 15 13.4 13.6V6.4Q13.4 5 12 5H9.6" fill="none" stroke="#2275b4" stroke-width="1.1"/><path d="M7 10V0.8M4.2 3.4L7 0.6L9.8 3.4" fill="none" stroke="#2275b4" stroke-width="1.1"/></svg>
<svg style="left:477.5px;top:16.6px" width="7" height="6" viewBox="0 0 7 6"><path d="M0.6 0.6H6.4L3.5 5.2Z" fill="none" stroke="#2275b4" stroke-width="1.2" stroke-linejoin="round"/></svg>
<div class="a sep" style="left:495.8px;top:11px;height:17.5px"></div>
<svg style="left:1138.5px;top:11.5px" width="17" height="17" viewBox="0 0 17 17"><path d="M0.8 0.8H16.2Q16.4 5.4 10.8 8.2V14.4L7.2 16.2V8.2Q0.6 5.4 0.8 0.8Z" fill="none" stroke="#2275b4" stroke-width="1.1" stroke-linejoin="round"/></svg>
<div class="a sep" style="left:1162.8px;top:11px;height:17.5px"></div>
<svg style="left:1176.3px;top:16.9px" width="7" height="6" viewBox="0 0 7 6"><path d="M0.6 0.6H6.4L3.5 5.2Z" fill="none" stroke="#2275b4" stroke-width="1.2" stroke-linejoin="round"/></svg>
<div class="a" style="left:1191.5px;top:14.6px;color:#2275b4;font-size:12.4px;-webkit-text-stroke:0.2px #2275b4;line-height:15px">MW</div>
<div class="a sep" style="left:1220.8px;top:11px;height:17.5px"></div>
<div class="a fade" style="top:77px;height:150px"></div>
<div class="a" style="left:0;top:39px;width:1222px;height:38.4px;background:#f0f0f0;border-top:1px solid #dcdcdc;border-bottom:1.6px solid #d2d2d2">
<svg style="left:25px;top:9.8px" width="16.2" height="15.8" viewBox="0 0 17 16.5"><rect x="0.6" y="0.6" width="15.8" height="15.3" rx="1.2" fill="none" stroke="#555" stroke-width="1.1"/><path d="M3.4 5.6H13.6M3.4 10.9H13.6" stroke="#555" stroke-width="1"/><circle cx="10.8" cy="5.6" r="1.5" fill="#f0f0f0" stroke="#555" stroke-width="1"/><circle cx="6.4" cy="10.9" r="1.5" fill="#f0f0f0" stroke="#555" stroke-width="1"/></svg>
<div class="a hc" style="left:65px;width:80px;">Číslo</div>
<svg style="left:128px;top:13.6px" width="7.4" height="6.2" viewBox="0 0 7.4 6.2"><path d="M0.6 0.6H6.800000000000001L3.7 5.4Z" fill="none" stroke="#666" stroke-width="1.2" stroke-linejoin="round"/></svg>
<div class="a hc" style="left:145px;width:350px;font-weight:bold;color:#000;font-size:12.05px;">Název dodavatele</div>
<svg style="left:478px;top:13.6px" width="7.4" height="6.2" viewBox="0 0 7.4 6.2"><path d="M0.6 0.6H6.800000000000001L3.7 5.4Z" fill="none" stroke="#666" stroke-width="1.2" stroke-linejoin="round"/></svg>
<div class="a hc" style="left:495px;width:100px;">IČO</div>
<svg style="left:578px;top:13.6px" width="7.4" height="6.2" viewBox="0 0 7.4 6.2"><path d="M0.6 0.6H6.800000000000001L3.7 5.4Z" fill="none" stroke="#666" stroke-width="1.2" stroke-linejoin="round"/></svg>
<div class="a hc" style="left:595px;width:150px;">Datum podání</div>
<svg style="left:728px;top:13.6px" width="7.4" height="6.2" viewBox="0 0 7.4 6.2"><path d="M0.6 0.6H6.800000000000001L3.7 5.4Z" fill="none" stroke="#666" stroke-width="1.2" stroke-linejoin="round"/></svg>
<div class="a hc" style="left:745px;width:150px;">Stav</div>
<svg style="left:878px;top:13.6px" width="7.4" height="6.2" viewBox="0 0 7.4 6.2"><path d="M0.6 0.6H6.800000000000001L3.7 5.4Z" fill="none" stroke="#666" stroke-width="1.2" stroke-linejoin="round"/></svg>
<div class="a hc" style="left:895px;width:140px;">Podepsána</div>
<svg style="left:1018px;top:13.6px" width="7.4" height="6.2" viewBox="0 0 7.4 6.2"><path d="M0.6 0.6H6.800000000000001L3.7 5.4Z" fill="none" stroke="#666" stroke-width="1.2" stroke-linejoin="round"/></svg>
<div class="a hc" style="left:1035px;width:140px;">Listinná podoba</div>
<svg style="left:1158px;top:13.6px" width="7.4" height="6.2" viewBox="0 0 7.4 6.2"><path d="M0.6 0.6H6.800000000000001L3.7 5.4Z" fill="none" stroke="#666" stroke-width="1.2" stroke-linejoin="round"/></svg>
<div class="a hc" style="left:1175px;width:140px;">Označení</div>
<svg style="left:261.5px;top:10.5px" width="12" height="12" viewBox="0 0 12 12"><path d="M6 11.6V0.8M1 5.6L6 0.6L11 5.6" fill="none" stroke="#111" stroke-width="1.1"/></svg>
</div>
<div class="a fade" style="top:39px;height:38px"></div>
<div class="a row" style="top:77px"><svg style="left:12px;top:9.9px" width="17" height="5.2" viewBox="0 0 17 5.2"><ellipse cx="2.6" cy="2.6" rx="2" ry="1.8" fill="none" stroke="#2275b4" stroke-width="1.1"/><ellipse cx="8.1" cy="2.6" rx="2" ry="1.8" fill="none" stroke="#2275b4" stroke-width="1.1"/><ellipse cx="13.6" cy="2.6" rx="2" ry="1.8" fill="none" stroke="#2275b4" stroke-width="1.1"/></svg><svg style="left:37.8px;top:4.300000000000001px" width="16.4" height="16.4" viewBox="0 0 16.4 16.4"><circle cx="8.2" cy="8.2" r="7.5" fill="none" stroke="#2275b4" stroke-width="1.1"/><circle cx="7.9" cy="4.9" r="0.8" fill="#2275b4"/><path d="M7 7.2H8.2V11.2Q8.2 11.9 9.3 11.6" fill="none" stroke="#2275b4" stroke-width="1" stroke-linecap="round"/></svg><span style="left:74px">001</span><span style="left:154px">Dodavatel - školení 2</span><span style="left:504.6px">12345678</span><span style="left:604px">22. 5. 2025 8:41</span><span style="left:754px">Otevírání zahájeno</span><svg style="left:962.3px;top:7.3px" width="8.4" height="8.4" viewBox="0 0 8.4 8.4"><path d="M0.9 0.9L7.5 7.5M7.5 0.9L0.9 7.5" stroke="#c9282a" stroke-width="2" fill="none"/></svg><svg style="left:1102.3px;top:7.3px" width="8.4" height="8.4" viewBox="0 0 8.4 8.4"><path d="M0.9 0.9L7.5 7.5M7.5 0.9L0.9 7.5" stroke="#c9282a" stroke-width="2" fill="none"/></svg></div>
<div class="a row" style="top:102px"><svg style="left:12px;top:9.9px" width="17" height="5.2" viewBox="0 0 17 5.2"><ellipse cx="2.6" cy="2.6" rx="2" ry="1.8" fill="none" stroke="#2275b4" stroke-width="1.1"/><ellipse cx="8.1" cy="2.6" rx="2" ry="1.8" fill="none" stroke="#2275b4" stroke-width="1.1"/><ellipse cx="13.6" cy="2.6" rx="2" ry="1.8" fill="none" stroke="#2275b4" stroke-width="1.1"/></svg><svg style="left:37.8px;top:4.300000000000001px" width="16.4" height="16.4" viewBox="0 0 16.4 16.4"><circle cx="8.2" cy="8.2" r="7.5" fill="none" stroke="#2275b4" stroke-width="1.1"/><circle cx="7.9" cy="4.9" r="0.8" fill="#2275b4"/><path d="M7 7.2H8.2V11.2Q8.2 11.9 9.3 11.6" fill="none" stroke="#2275b4" stroke-width="1" stroke-linecap="round"/></svg><span style="left:74px">002</span><span style="left:154px">Dodavatel - školení 3</span><span style="left:504.6px">12345678</span><span style="left:604px">22. 5. 2025 8:42</span><span style="left:754px">Otevírání zahájeno</span><svg style="left:962.3px;top:7.3px" width="8.4" height="8.4" viewBox="0 0 8.4 8.4"><path d="M0.9 0.9L7.5 7.5M7.5 0.9L0.9 7.5" stroke="#c9282a" stroke-width="2" fill="none"/></svg><svg style="left:1102.3px;top:7.3px" width="8.4" height="8.4" viewBox="0 0 8.4 8.4"><path d="M0.9 0.9L7.5 7.5M7.5 0.9L0.9 7.5" stroke="#c9282a" stroke-width="2" fill="none"/></svg></div>
<div class="a row" style="top:127px"><svg style="left:12px;top:9.9px" width="17" height="5.2" viewBox="0 0 17 5.2"><ellipse cx="2.6" cy="2.6" rx="2" ry="1.8" fill="none" stroke="#2275b4" stroke-width="1.1"/><ellipse cx="8.1" cy="2.6" rx="2" ry="1.8" fill="none" stroke="#2275b4" stroke-width="1.1"/><ellipse cx="13.6" cy="2.6" rx="2" ry="1.8" fill="none" stroke="#2275b4" stroke-width="1.1"/></svg><svg style="left:37.8px;top:4.300000000000001px" width="16.4" height="16.4" viewBox="0 0 16.4 16.4"><circle cx="8.2" cy="8.2" r="7.5" fill="none" stroke="#2275b4" stroke-width="1.1"/><circle cx="7.9" cy="4.9" r="0.8" fill="#2275b4"/><path d="M7 7.2H8.2V11.2Q8.2 11.9 9.3 11.6" fill="none" stroke="#2275b4" stroke-width="1" stroke-linecap="round"/></svg><span style="left:74px">003</span><span style="left:154px">Dodavatel - školení 5</span><span style="left:504.6px">12345678</span><span style="left:604px">22. 5. 2025 8:43</span><span style="left:754px">Otevírání zahájeno</span><svg style="left:962.3px;top:7.3px" width="8.4" height="8.4" viewBox="0 0 8.4 8.4"><path d="M0.9 0.9L7.5 7.5M7.5 0.9L0.9 7.5" stroke="#c9282a" stroke-width="2" fill="none"/></svg><svg style="left:1102.3px;top:7.3px" width="8.4" height="8.4" viewBox="0 0 8.4 8.4"><path d="M0.9 0.9L7.5 7.5M7.5 0.9L0.9 7.5" stroke="#c9282a" stroke-width="2" fill="none"/></svg></div>
<div class="a row" style="top:152px"><svg style="left:12px;top:9.9px" width="17" height="5.2" viewBox="0 0 17 5.2"><ellipse cx="2.6" cy="2.6" rx="2" ry="1.8" fill="none" stroke="#2275b4" stroke-width="1.1"/><ellipse cx="8.1" cy="2.6" rx="2" ry="1.8" fill="none" stroke="#2275b4" stroke-width="1.1"/><ellipse cx="13.6" cy="2.6" rx="2" ry="1.8" fill="none" stroke="#2275b4" stroke-width="1.1"/></svg><svg style="left:37.8px;top:4.300000000000001px" width="16.4" height="16.4" viewBox="0 0 16.4 16.4"><circle cx="8.2" cy="8.2" r="7.5" fill="none" stroke="#2275b4" stroke-width="1.1"/><circle cx="7.9" cy="4.9" r="0.8" fill="#2275b4"/><path d="M7 7.2H8.2V11.2Q8.2 11.9 9.3 11.6" fill="none" stroke="#2275b4" stroke-width="1" stroke-linecap="round"/></svg><span style="left:74px">004</span><span style="left:154px">Dodavatel - školení 6</span><span style="left:504.6px">45359326</span><span style="left:604px">22. 5. 2025 8:43</span><span style="left:754px">Otevírání zahájeno</span><svg style="left:962.3px;top:7.3px" width="8.4" height="8.4" viewBox="0 0 8.4 8.4"><path d="M0.9 0.9L7.5 7.5M7.5 0.9L0.9 7.5" stroke="#c9282a" stroke-width="2" fill="none"/></svg><svg style="left:1102.3px;top:7.3px" width="8.4" height="8.4" viewBox="0 0 8.4 8.4"><path d="M0.9 0.9L7.5 7.5M7.5 0.9L0.9 7.5" stroke="#c9282a" stroke-width="2" fill="none"/></svg></div>
<div class="a row" style="top:177px"><svg style="left:12px;top:9.9px" width="17" height="5.2" viewBox="0 0 17 5.2"><ellipse cx="2.6" cy="2.6" rx="2" ry="1.8" fill="none" stroke="#2275b4" stroke-width="1.1"/><ellipse cx="8.1" cy="2.6" rx="2" ry="1.8" fill="none" stroke="#2275b4" stroke-width="1.1"/><ellipse cx="13.6" cy="2.6" rx="2" ry="1.8" fill="none" stroke="#2275b4" stroke-width="1.1"/></svg><svg style="left:37.8px;top:4.300000000000001px" width="16.4" height="16.4" viewBox="0 0 16.4 16.4"><circle cx="8.2" cy="8.2" r="7.5" fill="none" stroke="#2275b4" stroke-width="1.1"/><circle cx="7.9" cy="4.9" r="0.8" fill="#2275b4"/><path d="M7 7.2H8.2V11.2Q8.2 11.9 9.3 11.6" fill="none" stroke="#2275b4" stroke-width="1" stroke-linecap="round"/></svg><span style="left:74px">006</span><span style="left:154px">Dodavatel - školení 6</span><span style="left:504.6px">45359326</span><span style="left:604px">22. 5. 2025 8:44</span><span style="left:754px">Otevírání zahájeno</span><svg style="left:962.3px;top:7.3px" width="8.4" height="8.4" viewBox="0 0 8.4 8.4"><path d="M0.9 0.9L7.5 7.5M7.5 0.9L0.9 7.5" stroke="#c9282a" stroke-width="2" fill="none"/></svg><svg style="left:1101.8px;top:7.3px" width="10.4" height="8.4" viewBox="0 0 10.4 8.4"><path d="M0.9 4.8L3.6 7.2L9.6 0.9" stroke="#2fb843" stroke-width="2" fill="none"/></svg></div>
<div class="a row" style="top:202px"><svg style="left:12px;top:9.9px" width="17" height="5.2" viewBox="0 0 17 5.2"><ellipse cx="2.6" cy="2.6" rx="2" ry="1.8" fill="none" stroke="#2275b4" stroke-width="1.1"/><ellipse cx="8.1" cy="2.6" rx="2" ry="1.8" fill="none" stroke="#2275b4" stroke-width="1.1"/><ellipse cx="13.6" cy="2.6" rx="2" ry="1.8" fill="none" stroke="#2275b4" stroke-width="1.1"/></svg><svg style="left:37.8px;top:4.300000000000001px" width="16.4" height="16.4" viewBox="0 0 16.4 16.4"><circle cx="8.2" cy="8.2" r="7.5" fill="none" stroke="#2275b4" stroke-width="1.1"/><circle cx="7.9" cy="4.9" r="0.8" fill="#2275b4"/><path d="M7 7.2H8.2V11.2Q8.2 11.9 9.3 11.6" fill="none" stroke="#2275b4" stroke-width="1" stroke-linecap="round"/></svg><span style="left:74px">005</span><span style="left:154px">Dodavatel - školení 7</span><span style="left:504.6px">12345678</span><span style="left:604px">22. 5. 2025 8:44</span><span style="left:754px">Otevírání zahájeno</span><svg style="left:962.3px;top:7.3px" width="8.4" height="8.4" viewBox="0 0 8.4 8.4"><path d="M0.9 0.9L7.5 7.5M7.5 0.9L0.9 7.5" stroke="#c9282a" stroke-width="2" fill="none"/></svg><svg style="left:1102.3px;top:7.3px" width="8.4" height="8.4" viewBox="0 0 8.4 8.4"><path d="M0.9 0.9L7.5 7.5M7.5 0.9L0.9 7.5" stroke="#c9282a" stroke-width="2" fill="none"/></svg></div>
<div class="a sbt" style="top:227px;width:1222px"></div>
<div class="a sbth" style="left:2px;top:229px;width:1097px"></div>
</div>
</div>
<div class="a" style="left:0;top:844px;width:1.3px;height:33px;background:#fff"></div>
</body></html>
